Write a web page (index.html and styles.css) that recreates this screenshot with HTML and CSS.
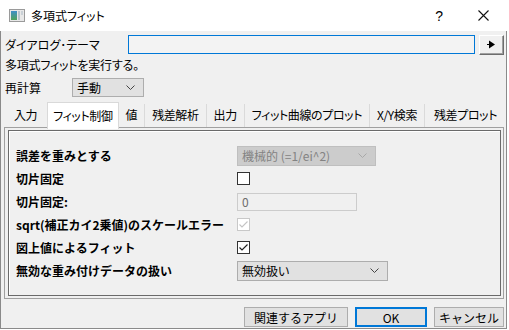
FILE: index.html
```html
<!DOCTYPE html>
<html lang="ja">
<head>
<meta charset="UTF-8">
<title>多項式フィット</title>
<link rel="stylesheet" href="styles.css">
</head>
<body>
<div class="window">
  <div class="titlebar">
    <svg class="app-icon" width="16" height="13" viewBox="0 0 16 13">
      <defs>
        <linearGradient id="ig" x1="0" y1="0" x2="0" y2="1">
          <stop offset="0" stop-color="#3f8fc9"/>
          <stop offset="1" stop-color="#4fa35a"/>
        </linearGradient>
      </defs>
      <rect x="0.5" y="0.5" width="15" height="12" fill="#e8e8e8" stroke="#9a9a9a"/>
      <rect x="2" y="2" width="6" height="9" fill="url(#ig)"/>
      <rect x="9" y="2" width="2" height="9" fill="#b8c4cc"/>
      <rect x="12" y="2" width="2" height="4" fill="#c9d0d6"/>
    </svg>
    <span class="title">多項式フィット</span>
    <span class="help">?</span>
    <svg class="close" width="11" height="11" viewBox="0 0 11 11">
      <path d="M0.5 0.5 L10.5 10.5 M10.5 0.5 L0.5 10.5" stroke="#111" stroke-width="1.1"/>
    </svg>
  </div>

  <div class="content">
    <div class="theme-row">
      <span class="theme-label">ダイアログ･テーマ</span>
      <div class="theme-input"></div>
      <button class="arrow-btn">
        <svg width="9" height="9" viewBox="0 0 9 9">
          <path d="M2 0.5 L8 4.5 L2 8.5 Z" fill="#000"/>
          <path d="M0 4.5 H3" stroke="#000" stroke-width="1"/>
        </svg>
      </button>
    </div>

    <div class="desc">多項式フィットを実行する。</div>

    <div class="recalc-row">
      <span class="recalc-label">再計算</span>
      <div class="select small">
        <span>手動</span>
        <svg class="chev" width="9" height="5" viewBox="0 0 9 5"><path d="M0.5 0.5 L4.5 4.5 L8.5 0.5" fill="none" stroke="#444"/></svg>
      </div>
    </div>

    <div class="tabs">
      <div class="tab first">入力</div>
      <div class="tab active">フィット制御</div>
      <div class="tab">値</div>
      <div class="tab">残差解析</div>
      <div class="tab">出力</div>
      <div class="tab">フィット曲線のプロット</div>
      <div class="tab">X/Y検索</div>
      <div class="tab last">残差プロット</div>
    </div>

    <div class="pane">
      <div class="frame">
        <div class="form">
          <div class="label">誤差を重みとする</div>
          <div class="select disabled wide">
            <span>機械的 (=1/ei^2)</span>
            <svg class="chev" width="9" height="5" viewBox="0 0 9 5"><path d="M0.5 0.5 L4.5 4.5 L8.5 0.5" fill="none" stroke="#a8a8a8"/></svg>
          </div>

          <div class="label">切片固定</div>
          <div class="checkbox"></div>

          <div class="label">切片固定:</div>
          <div class="text-input disabled">0</div>

          <div class="label">sqrt(補正カイ2乗値)のスケールエラー</div>
          <div class="checkbox disabled">
            <svg width="11" height="11" viewBox="0 0 11 11"><path d="M1.5 5.5 L4 8 L9.5 2.5" fill="none" stroke="#c4c4c4" stroke-width="1.1"/></svg>
          </div>

          <div class="label">図上値によるフィット</div>
          <div class="checkbox">
            <svg width="11" height="11" viewBox="0 0 11 11"><path d="M1.5 5.5 L4 8 L9.5 2.5" fill="none" stroke="#222" stroke-width="1.2"/></svg>
          </div>

          <div class="label">無効な重み付けデータの扱い</div>
          <div class="select wider">
            <span>無効扱い</span>
            <svg class="chev" width="9" height="5" viewBox="0 0 9 5"><path d="M0.5 0.5 L4.5 4.5 L8.5 0.5" fill="none" stroke="#444"/></svg>
          </div>
        </div>
      </div>
    </div>

    <div class="footer">
      <button class="btn apps">関連するアプリ</button>
      <button class="btn ok">OK</button>
      <button class="btn cancel">キャンセル</button>
    </div>
  </div>
</div>
</body>
</html>
```

FILE: styles.css
```css
body {
  margin: 0;
  background-color: #ffffff;
  font-family: "Noto Sans CJK JP", "Liberation Sans", sans-serif;
  font-size: 12px;
  color: #000;
  font-feature-settings: "palt";
}

.window {
  width: 505px;
  height: 328px;
  border: 1px solid #8a8a8a;
  border-top: none;
  background-color: #f0f0f0;
}

/* title bar */
.titlebar {
  height: 31px;
  background-color: #fff;
  display: flex;
  align-items: center;
  margin-left: -1px;
  margin-right: -1px;
}

.app-icon {
  margin-left: 9px;
  margin-right: 6px;
}

.title {
  flex: 1;
  font-size: 12px;
  line-height: 16px;
}

.help {
  font-family: "Liberation Sans", sans-serif;
  font-size: 14px;
  margin-right: 35px;
}

.close {
  margin-right: 18px;
}

/* top rows */
.theme-row {
  display: flex;
  align-items: center;
  height: 19px;
  margin-top: 4px;
  padding-left: 4px;
}

.theme-label {
  width: 123px;
}

.theme-input {
  width: 345px;
  height: 17px;
  border: 1px solid #0078d7;
  background-color: #f3f3f3;
}

.arrow-btn {
  width: 25px;
  height: 20px;
  margin-left: 4px;
  padding: 0;
  border: 1px solid;
  border-color: #fff #6d6d6d #6d6d6d #fff;
  box-shadow: inset -1px -1px #a0a0a0;
  background-color: #f0f0f0;
  display: flex;
  align-items: center;
  justify-content: center;
}

.desc {
  margin-top: 3px;
  line-height: 16px;
  padding-left: 4px;
  letter-spacing: -0.2px;
}

.recalc-row {
  display: flex;
  align-items: center;
  height: 19px;
  margin-top: 5px;
  padding-left: 4px;
}

.recalc-label {
  width: 67px;
}

.select {
  box-sizing: border-box;
  height: 20px;
  border: 1px solid #adadad;
  background-color: #e1e1e1;
  display: flex;
  align-items: center;
  justify-content: space-between;
  padding: 0 8px 0 4px;
}

.select.small {
  width: 72px;
  height: 19px;
}

.select.wide {
  width: 139px;
}

.select.wider {
  width: 151px;
}

.select.disabled {
  background-color: #cccccc;
  border-color: #bfbfbf;
  color: #838383;
}

/* tabs */
.tabs {
  display: flex;
  align-items: flex-end;
  height: 25px;
  margin-top: 5px;
  padding-left: 4px;
  position: relative;
  z-index: 1;
  letter-spacing: -0.4px;
}

.tab {
  flex-shrink: 0;
  white-space: nowrap;
  height: 23px;
  line-height: 22px;
  padding: 0 7px;
  border-right: 1px solid #dadada;
  box-sizing: border-box;
}

.tab.first {
  padding: 0 10px 0 9px;
}

.tab.last {
  border-right: none;
  padding: 0 7px 0 9px;
}

.tab.active {
  height: 27px;
  margin-bottom: -2px;
  padding: 0 5px;
  line-height: 26px;
  background-color: #fff;
  border: 1px solid #d9d9d9;
  border-bottom: none;
  margin-left: -1px;
}

/* tab pane */
.pane {
  box-sizing: border-box;
  height: 172px;
  width: 500px;
  margin-left: 3px;
  border: 1px solid #a0a0a0;
  padding: 2px 2px 2px 3px;
}

.frame {
  box-sizing: border-box;
  height: 100%;
  border: 1px solid #6a6a6a;
  box-shadow: inset 1px 1px #ffffff;
  padding: 13px 0 0 7px;
}

.form {
  display: grid;
  grid-template-columns: 221px auto;
  grid-auto-rows: 23px;
  align-items: center;
  justify-items: start;
}

.label {
  font-weight: 700;
  font-feature-settings: normal;
}

.checkbox {
  box-sizing: border-box;
  width: 13px;
  height: 13px;
  border: 1px solid #333;
  background-color: #fff;
  display: flex;
  align-items: center;
  justify-content: center;
}

.checkbox.disabled {
  border-color: #c8c8c8;
}

.text-input {
  box-sizing: border-box;
  width: 120px;
  height: 18px;
  border: 1px solid #cccccc;
  background-color: #f0f0f0;
  padding-left: 4px;
  line-height: 16px;
}

.text-input.disabled {
  color: #6d6d6d;
}

/* bottom buttons */
.footer {
  display: flex;
  justify-content: flex-end;
  gap: 7px;
  margin-top: 8px;
  padding-right: 2px;
}

.btn {
  box-sizing: border-box;
  height: 20px;
  padding: 0;
  font-family: inherit;
  font-size: 12px;
  border: 1px solid #adadad;
  background-color: #e1e1e1;
  color: #000;
}

.btn.apps {
  width: 104px;
}

.btn.ok {
  width: 72px;
  border: 2px solid #0078d7;
}

.btn.cancel {
  width: 70px;
}
```
